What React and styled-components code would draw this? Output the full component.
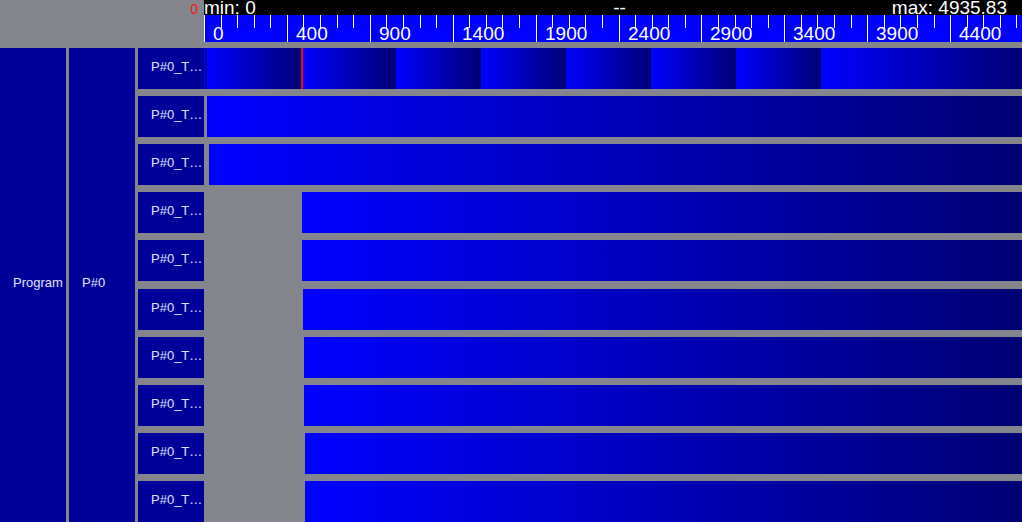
import React from 'react'
import styled, { createGlobalStyle } from 'styled-components'

const GlobalStyle = createGlobalStyle`
  html, body {
    margin: 0;
    padding: 0;
    background: #85858d;
    overflow: hidden;
  }
  body {
    font-family: "Liberation Sans", Arial, sans-serif;
  }
`

const Page = styled.div`
  display: flex;
  flex-direction: column;
  row-gap: 6px;
  width: 1022px;
  height: 522px;
  overflow: hidden;
  background: #85858d;
`

const Header = styled.div`
  display: flex;
  height: 42px;
`

const Corner = styled.div`
  width: 204px;
  flex-shrink: 0;
  display: flex;
  justify-content: flex-end;
  padding-right: 6px;
  box-sizing: border-box;
  color: #f01818;
  font-size: 14px;
  line-height: 18px;
`

const Axis = styled.div`
  flex: 1;
  display: flex;
  flex-direction: column;
`

const InfoStrip = styled.div`
  height: 15px;
  background: #000;
  color: #fff;
  font-size: 19px;
  line-height: 15px;
  display: grid;
  grid-template-columns: 1fr auto 1fr;
  padding-right: 15px;
  white-space: nowrap;
`

const Center = styled.span`
  padding-left: 28px;
`

const Right = styled.span`
  text-align: right;
`

const Ruler = styled.svg`
  display: block;
  height: 27px;
  width: 100%;
  background: #0000ff;
`

const Body = styled.div`
  flex: 1;
  display: flex;
  column-gap: 3px;
  min-height: 0;
`

const Cell = styled.div`
  background: #000099;
  color: #e2e2ff;
  font-size: 13px;
  display: flex;
  align-items: center;
  box-sizing: border-box;
  padding: 0 0 ${({ $lift }) => $lift}px 13px;
  white-space: nowrap;
  overflow: hidden;
`

const GroupCell = styled(Cell)`
  width: 66px;
  flex-shrink: 0;
`

const Threads = styled.div`
  flex: 1;
  display: flex;
  flex-direction: column;
  row-gap: 7.11px;
`

const ThreadRow = styled.div`
  display: flex;
  height: 41px;
  flex-shrink: 0;
`

const ThreadLabel = styled(Cell)`
  width: 66px;
  flex-shrink: 0;
  span {
    overflow: hidden;
    text-overflow: ellipsis;
  }
`

const Track = styled.div`
  flex: 1;
  display: flex;
  position: relative;
  padding-left: ${({ $start }) => $start}px;
`

const Segment = styled.div`
  height: 100%;
  flex: ${({ $grow }) => ($grow ? '1' : 'none')};
  background: linear-gradient(to right, #0000ff, #000074);
`

const Marker = styled.div`
  position: absolute;
  top: 0;
  bottom: 0;
  left: ${({ $x }) => $x}px;
  width: 2px;
  background: #ff0000;
`

const MAJOR = 82.9
const MINOR = MAJOR / 5
const labels = ['0', '400', '900', '1400', '1900', '2400', '2900', '3400', '3900', '4400']

function TimeRuler() {
  const ticks = []
  for (let i = 0; i * MINOR < 818; i++) {
    const x = Math.round(i * MINOR) + 0.5
    ticks.push(<line key={i} x1={x} x2={x} y1={0} y2={i % 5 === 0 ? 27 : 13} stroke="#fff" strokeWidth="1" />)
  }
  return (
    <Ruler>
      {ticks}
      {labels.map((l, i) => (
        <text
          key={l}
          x={Math.round(i * MAJOR) + 9}
          y={25}
          fill="#fff"
          fontSize="19"
          fontFamily="Liberation Sans, Arial, sans-serif"
        >
          {l}
        </text>
      ))}
    </Ruler>
  )
}

// first thread is split into many slices, the rest are one long slice
const firstSlices = [3, 96, 93, 85, 85, 85, 85, 85]
const starts = [0, 3, 5, 98, 98, 99, 100, 100, 101, 101]

export default function App() {
  return (
    <Page>
      <GlobalStyle />
      <Header>
        <Corner>0</Corner>
        <Axis>
          <InfoStrip>
            <span>min: 0</span>
            <Center>--</Center>
            <Right>max: 4935.83</Right>
          </InfoStrip>
          <TimeRuler />
        </Axis>
      </Header>
      <Body>
        <GroupCell $lift={6}>Program</GroupCell>
        <GroupCell $lift={6}>P#0</GroupCell>
        <Threads>
          {starts.map((start, i) => (
            <ThreadRow key={i}>
              <ThreadLabel $lift={4}>
                <span>P#0_Thread_{i}</span>
              </ThreadLabel>
              <Track $start={start}>
                {i === 0 ? (
                  <>
                    {firstSlices.map((w, j) => (
                      <Segment key={j} style={{ width: w }} />
                    ))}
                    <Segment $grow />
                    <Marker $x={97} />
                  </>
                ) : (
                  <Segment $grow />
                )}
              </Track>
            </ThreadRow>
          ))}
        </Threads>
      </Body>
    </Page>
  )
}
